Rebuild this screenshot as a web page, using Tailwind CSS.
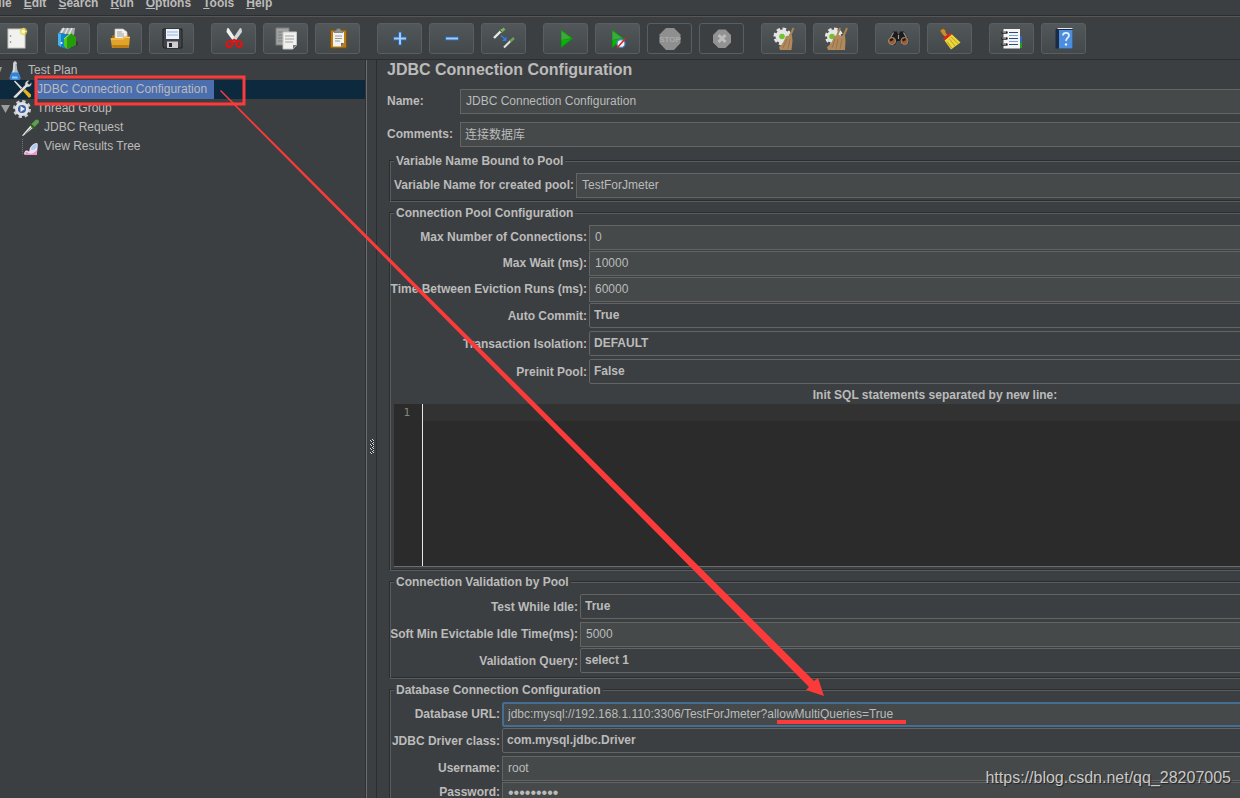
<!DOCTYPE html>
<html lang="en">
<head>
<meta charset="utf-8">
<title>JDBC Connection Configuration</title>
<script src="https://cdn.jsdelivr.net/npm/@tailwindcss/browser@4"></script>
</head>
<body class="relative flex h-screen flex-col overflow-hidden bg-[#3c3f41] font-['Liberation_Sans','Noto_Sans_CJK_SC',sans-serif] text-xs text-[#bbbbbb]">

<!-- Menu bar -->
<nav class="-mt-[5px] -ml-[9px] flex h-[21px] shrink-0 items-start gap-3 border-b border-[#2b2d2e] font-bold">
  <button class="leading-4"><u>F</u>ile</button>
  <button class="leading-4"><u>E</u>dit</button>
  <button class="leading-4"><u>S</u>earch</button>
  <button class="leading-4"><u>R</u>un</button>
  <button class="leading-4"><u>O</u>ptions</button>
  <button class="leading-4"><u>T</u>ools</button>
  <button class="leading-4"><u>H</u>elp</button>
</nav>

<!-- Toolbar -->
<div role="toolbar" class="-ml-[7px] flex h-[44px] shrink-0 gap-[17px] border-t border-b border-t-[#5a5653] border-b-[#2b2d2e] pt-[6px]">
  <div class="flex gap-[7px]">
    <button aria-label="New" class="flex h-[31px] w-[45px] items-center justify-center rounded-[3px] border border-[#5b5e60] bg-linear-to-b from-[#525759] to-[#43484a]">
      <svg class="size-6 shrink-0" viewBox="0 0 24 24"><rect x="4" y="2" width="17" height="19" fill="#f1f1ef" stroke="#c9c7c2"/><circle cx="6.500" cy="9" r=".8" fill="#777"/><circle cx="6.500" cy="15" r=".8" fill="#777"/><circle cx="19.500" cy="4.500" r="3.800" fill="#e6cf3a" opacity=".55"/><path d="M19.500 1v7M16 4.500h7" stroke="#f0dc4e" stroke-width="1.500"/><circle cx="19.500" cy="4.500" r="1.800" fill="#fffbd0"/></svg>
    </button>
    <button aria-label="Templates" class="flex h-[31px] w-[45px] items-center justify-center rounded-[3px] border border-[#5b5e60] bg-linear-to-b from-[#525759] to-[#43484a]">
      <svg class="size-6 shrink-0" viewBox="0 0 24 24"><path d="M3 6l3-5h13l-1 7z" fill="#a9adb0"/><path d="M5 6l3-5M9 7l3-6M13 7l3-6" stroke="#e5e7e8" stroke-width="1.500"/><path d="M15 21l7-3v-4l-6 4z" fill="#222" opacity=".5"/><path d="M2 6l8 1 3 2v13l-6-1-5-3z" fill="#1583c9"/><path d="M2 6l3 1v13l-3-2z" fill="#3fb4ee"/><circle cx="5.500" cy="16" r="1" fill="#fff"/><path d="M8 12l7-6 5 5v7l-9 4-3-3z" fill="#4ec51e"/><path d="M11 11l4-5 5 5v7l-9 4z" fill="#249c0c"/><path d="M8 12l7-6" stroke="#96ed5c"/></svg>
    </button>
    <button aria-label="Open" class="flex h-[31px] w-[45px] items-center justify-center rounded-[3px] border border-[#5b5e60] bg-linear-to-b from-[#525759] to-[#43484a]">
      <svg class="size-6 shrink-0" viewBox="0 0 24 24"><path d="M4 9l3-2h13l1 4v8H4z" fill="#a36d0c"/><path d="M7 13V2h8l4 3v8z" fill="#f2f2f0" stroke="#c8c8c6" stroke-width=".7"/><path d="M9 5h5M9 7h7M9 9h7" stroke="#92928f" stroke-width=".9"/><path d="M2.500 11h12l2-1.500H22l-1 10.500-1 1H4z" fill="#e2a32a"/><path d="M3 12h12l2-1.500h5" fill="none" stroke="#f7cd67"/><path d="M4 18h17l-.5 3H4.500z" fill="#bc7d13"/></svg>
    </button>
    <button aria-label="Save" class="flex h-[31px] w-[45px] items-center justify-center rounded-[3px] border border-[#5b5e60] bg-linear-to-b from-[#525759] to-[#43484a]">
      <svg class="size-6 shrink-0" viewBox="0 0 24 24"><path d="M3 2h19v19H4l-1-1z" fill="#41434a" stroke="#1f2023"/><path d="M6 2h13v10H6z" fill="#eef3fa"/><path d="M7 5h11M7 8h11" stroke="#8fb3dd"/><path d="M7 14.500h11v6.500H7z" fill="#cfcfd1"/><path d="M9 16h3v4H9z" fill="#26272a"/></svg>
    </button>
  </div>
  <div class="flex gap-[7px]">
    <button aria-label="Cut" class="flex h-[31px] w-[45px] items-center justify-center rounded-[3px] border border-[#5b5e60] bg-linear-to-b from-[#525759] to-[#43484a]">
      <svg class="size-6 shrink-0" viewBox="0 0 24 24"><path d="M5 1.500l1.500-.5 8 12-3 1.500L4.500 5z" fill="#f0f0f0"/><path d="M19.500 1.500L18 1l-8 12 3 1.500L20 5z" fill="#d3d5d5"/><ellipse cx="7.500" cy="17.200" rx="2.600" ry="3" fill="none" stroke="#dc1414" stroke-width="2.200" transform="rotate(35 7.500 17.200)"/><ellipse cx="17" cy="17.200" rx="2.600" ry="3" fill="none" stroke="#dc1414" stroke-width="2.200" transform="rotate(-35 17 17.200)"/><path d="M9 14.500l3.200-1.500 3.300 1.500" fill="none" stroke="#dc1414" stroke-width="2.200"/></svg>
    </button>
    <button aria-label="Copy" class="flex h-[31px] w-[45px] items-center justify-center rounded-[3px] border border-[#5b5e60] bg-linear-to-b from-[#525759] to-[#43484a]">
      <svg class="size-6 shrink-0" viewBox="0 0 24 24"><path d="M2 1h13v17H2z" fill="#a1a3a2" stroke="#7d7f7f"/><path d="M4 5h9M4 8h6M4 11h5M4 14h5" stroke="#7d7f7f"/><path d="M9 5h13.500v13L19 22H9z" fill="#f0f0ee" stroke="#c6c6c4"/><path d="M11 9h9M11 12h9M11 15h8" stroke="#a0a09e"/><path d="M22.500 18H19v4z" fill="#777"/></svg>
    </button>
    <button aria-label="Paste" class="flex h-[31px] w-[45px] items-center justify-center rounded-[3px] border border-[#5b5e60] bg-linear-to-b from-[#525759] to-[#43484a]">
      <svg class="size-6 shrink-0" viewBox="0 0 24 24"><rect x="4.500" y="3" width="16" height="18" rx="1" fill="#b97c17" stroke="#80500a"/><path d="M7 5h11v11l-3 3.500H7z" fill="#f2f2f0"/><path d="M9 9h7M9 11.500h7M9 14h5" stroke="#999"/><path d="M18 16h-3v3.500z" fill="#666"/><path d="M8 5.500V3.500h2L11 1.500h3l1 2h2v2z" fill="#8e918d" stroke="#5f625f" stroke-width=".6"/></svg>
    </button>
  </div>
  <div class="flex gap-[7px]">
    <button aria-label="Expand all" class="flex h-[31px] w-[45px] items-center justify-center rounded-[3px] border border-[#5b5e60] bg-linear-to-b from-[#525759] to-[#43484a]">
      <svg class="size-6 shrink-0" viewBox="0 0 24 24"><path d="M12 4.500v14M5 11.500h14" stroke="#2e66b4" stroke-width="4"/><path d="M12 5.500v12M6 11.500h12" stroke="#a5cdf8" stroke-width="2"/></svg>
    </button>
    <button aria-label="Collapse all" class="flex h-[31px] w-[45px] items-center justify-center rounded-[3px] border border-[#5b5e60] bg-linear-to-b from-[#525759] to-[#43484a]">
      <svg class="size-6 shrink-0" viewBox="0 0 24 24"><path d="M5 11.500h14" stroke="#2e66b4" stroke-width="4"/><path d="M6 11.500h12" stroke="#a5cdf8" stroke-width="2"/></svg>
    </button>
    <button aria-label="Toggle" class="flex h-[31px] w-[45px] items-center justify-center rounded-[3px] border border-[#5b5e60] bg-linear-to-b from-[#525759] to-[#43484a]">
      <svg class="size-6 shrink-0" viewBox="0 0 24 24"><path d="M2 11l8-8" stroke="#e8ebe6" stroke-width="2.400"/><path d="M8.500 5L12.500 1.500" stroke="#7cb25c" stroke-width="2.800"/><path d="M8 3l3.500 3.500" stroke="#446d33"/><path d="M12 20.500l7-7" stroke="#dfe2dd" stroke-width="2"/><path d="M18 14.500l4-3.500" stroke="#6da152" stroke-width="2.400"/><path d="M9 8.500l4.500 4" stroke="#2f7fe8" stroke-width="1.400"/><path d="M14.500 9.500v4.500H10z" fill="#2f7fe8"/></svg>
    </button>
  </div>
  <div class="flex gap-[7px]">
    <button aria-label="Start" class="flex h-[31px] w-[45px] items-center justify-center rounded-[3px] border border-[#5b5e60] bg-linear-to-b from-[#525759] to-[#43484a]">
      <svg class="size-6 shrink-0" viewBox="0 0 24 24"><path d="M7 2.500l12 9L7 21z" fill="#0a9a0a"/><path d="M7.500 4l9.500 7-9.500 2z" fill="#3fa83f"/><path d="M8 13l9-1-9 7z" fill="#06b806"/></svg>
    </button>
    <button aria-label="Start no pauses" class="flex h-[31px] w-[45px] items-center justify-center rounded-[3px] border border-[#5b5e60] bg-linear-to-b from-[#525759] to-[#43484a]">
      <svg class="size-6 shrink-0" viewBox="0 0 24 24"><path d="M6 2.500l12 9L6 21z" fill="#0a9a0a"/><path d="M6.500 4l9.500 7-9.500 2z" fill="#3fa83f"/><path d="M7 13l8-1-8 7z" fill="#06b806"/><circle cx="15" cy="16.500" r="4" fill="#eef4fb" stroke="#4a87c9" stroke-width="1.300"/><path d="M11 21l8.500-9.500" stroke="#e32222" stroke-width="1.500"/></svg>
    </button>
    <button aria-label="Stop" class="flex h-[31px] w-[45px] items-center justify-center rounded-[3px] border border-[#5b5e60]">
      <svg class="size-6 shrink-0" viewBox="0 0 24 24"><path d="M8 1h8l6.500 6.500v8.500L16 23H8l-6.500-7V7.500z" fill="#8f8f8f"/><text x="12" y="15" text-anchor="middle" font-size="8" font-weight="bold" fill="#ababab" font-family="Liberation Sans">STOP</text></svg>
    </button>
    <button aria-label="Shutdown" class="flex h-[31px] w-[45px] items-center justify-center rounded-[3px] border border-[#5b5e60]">
      <svg class="size-6 shrink-0" viewBox="0 0 24 24"><path d="M8.500 2.500h7L21 8v7.500L15.500 21h-7L3 15.500V8z" fill="#929292"/><path d="M8.500 8l7 7M15.500 8l-7 7" stroke="#bcbcbc" stroke-width="3"/></svg>
    </button>
  </div>
  <div class="flex gap-[7px]">
    <button aria-label="Clear" class="flex h-[31px] w-[45px] items-center justify-center rounded-[3px] border border-[#5b5e60] bg-linear-to-b from-[#525759] to-[#43484a]">
      <svg class="size-6 shrink-0" viewBox="0 0 24 24"><circle cx="10.500" cy="9.500" r="7.800" fill="none" stroke="#e6e6e4" stroke-width="2.500" stroke-dasharray="3.600 2.500"/><circle cx="10.500" cy="9.500" r="7" fill="#e6e6e4"/><circle cx="10" cy="9.500" r="2.800" fill="#6fc32e"/><path d="M21.500 1l-3.500 8" stroke="#a98350" stroke-width="2"/><path d="M14 9l6-1 .5 6-1 9H8l-1-3c3-2 5-6 7-11z" fill="#b08a5c"/><path d="M15 12l-4 9M18 12l-2 10" stroke="#96744a" stroke-width="1"/></svg>
    </button>
    <button aria-label="Clear all" class="flex h-[31px] w-[45px] items-center justify-center rounded-[3px] border border-[#5b5e60] bg-linear-to-b from-[#525759] to-[#43484a]">
      <svg class="size-6 shrink-0" viewBox="0 0 24 24"><circle cx="10" cy="9.500" r="7.800" fill="none" stroke="#e6e6e4" stroke-width="2.500" stroke-dasharray="3.600 2.500"/><circle cx="10" cy="9.500" r="7" fill="#e6e6e4"/><circle cx="8" cy="9.500" r="2.800" fill="#6fc32e"/><path d="M16 1l-3 8M23 1l-3.500 8" stroke="#a98350" stroke-width="2"/><path d="M10 9l5-1 2 1 4-1 .5 6-.5 9H4l-1-3c3-2 6-6 7-11z" fill="#b08a5c"/><path d="M11 12l-3 9M14 12l-2 10M18 12l-2 10" stroke="#96744a"/></svg>
    </button>
  </div>
  <div class="flex gap-[7px]">
    <button aria-label="Search" class="flex h-[31px] w-[45px] items-center justify-center rounded-[3px] border border-[#5b5e60] bg-linear-to-b from-[#525759] to-[#43484a]">
      <svg class="size-6 shrink-0" viewBox="0 0 24 24"><path d="M7 4.500h4l1 3h1l1-3h4l4 7 1 4-3 2.500h-4l-2-4h-3l-2 4H5L2 15.500l1-4z" fill="#1b1b1c"/><path d="M7.500 5.500l-3 5M17.500 5.500l3 5M12.500 8v4" stroke="#999" stroke-width="1.200"/><circle cx="6" cy="14" r="3.600" fill="#a65a28" stroke="#8c8c8c"/><circle cx="18.500" cy="14" r="3.600" fill="#a65a28" stroke="#8c8c8c"/><path d="M4 13.500l3-1.500M16.500 13.500l3-1.500" stroke="#2c1408" stroke-width="2"/></svg>
    </button>
    <button aria-label="Reset search" class="flex h-[31px] w-[45px] items-center justify-center rounded-[3px] border border-[#5b5e60] bg-linear-to-b from-[#525759] to-[#43484a]">
      <svg class="size-6 shrink-0" viewBox="0 0 24 24"><path d="M2 3.500l3-2 2.500 1.500.5 3 2 2-3 2-3-3z" fill="#c98d34" stroke="#7d5316" stroke-width=".7"/><path d="M6.500 13.500L13.500 7l9 8.500-9.500 7z" fill="#ecd63b"/><path d="M9 14.500l5 7M11.500 12l5.500 7M13 10l7.500 7" stroke="#b39a18" stroke-width=".9"/><path d="M5.500 12.500L13 6.500" stroke="#d92424" stroke-width="2.600"/></svg>
    </button>
  </div>
  <div class="flex gap-[7px]">
    <button aria-label="Function helper" class="flex h-[31px] w-[45px] items-center justify-center rounded-[3px] border border-[#5b5e60] bg-linear-to-b from-[#525759] to-[#43484a]">
      <svg class="size-6 shrink-0" viewBox="0 0 24 24"><path d="M19 9h3v6.500h-3z" fill="#2c66c8"/><path d="M19 15.500h3V21h-3z" fill="#279a1c"/><path d="M3.500 2h16.500v19.500H3.500z" fill="#f5f5f5"/><path d="M9 5.500h9M9 11.500h9M9 17.500h9" stroke="#2c4c78" stroke-width="1.200"/><path d="M9 8.500h9M9 14.500h9" stroke="#77a0de"/><path d="M2.500 5.500h4M2.500 11.500h4M2.500 17.500h4" stroke="#222" stroke-width="2.600" stroke-linecap="round"/><path d="M2.500 5h3.500M2.500 11h3.500M2.500 17h3.500" stroke="#ddd"/></svg>
    </button>
    <button aria-label="Help" class="flex h-[31px] w-[45px] items-center justify-center rounded-[3px] border border-[#5b5e60] bg-linear-to-b from-[#525759] to-[#43484a]">
      <svg class="size-6 shrink-0" viewBox="0 0 24 24"><path d="M3.500 2.500l2-1.500h15v20.500h-17z" fill="#1c2b42"/><path d="M7 3h13.500v18.500H7z" fill="#4d8ddd"/><path d="M5.500 1.500h15" stroke="#e5e5e5"/><path d="M11 8.500c0-3.500 6-3.500 6 0 0 2.500-3 2.500-3 5.500" fill="none" stroke="#e4effc" stroke-width="1.700"/><circle cx="14" cy="17.500" r="1.200" fill="#e4effc"/></svg>
    </button>
  </div>
</div>

<div class="flex min-h-0 flex-1">
  <!-- Test plan tree -->
  <ul role="tree" class="w-[366px] shrink-0 border-r border-[#2f3132] pt-px">
    <li role="treeitem" class="flex h-[19px] items-center">
      <svg class="h-2 w-1" viewBox="0 0 4 8"><path d="M-5 0h7L-1 8z" fill="#9a9c9d"/></svg>
      <svg class="ml-[5px] h-[19px] w-3" viewBox="0 0 12 19"><path d="M4.500 2h3l.8 7 3.200 8-1 1.500h-9l-1-1.500 3.200-8z" fill="#b3bac1"/><path d="M4 2h4M6 0v2M5 3v7l-2 3" stroke="#f3f5f7" fill="none"/><path d="M2.500 11.500h7L11.500 17l-1 1.500H1.500L.5 17z" fill="#2f83dd"/><path d="M3 15.500h5l1 2H3z" fill="#8fd0ff"/></svg>
      <span class="ml-[7px] leading-[19px]">Test Plan</span>
    </li>
    <li role="treeitem" aria-selected="true" class="flex h-[19px] items-center bg-[#0d293e]">
      <svg class="ml-[13px] h-[19px] w-[19px]" viewBox="0 0 19 19"><path d="M1 1.500l1-1 8 8-1.500 1.500z" fill="#d9dada"/><path d="M9 10l2-2 7 6.500v2L16 18z" fill="#e9b51c"/><path d="M1 18l-.5-1.500L12 5c-.5-3 2-5 4.500-4.500L14.500 3l1.500 1.500L18.500 2.500C19 5 17 7.500 14 7L3 18z" fill="#dcdddd" stroke="#3a3c3d" stroke-width=".5"/></svg>
      <span class="ml-1 bg-[#4b6eaf] pr-[7px] pl-px leading-[19px]">JDBC Connection Configuration</span>
    </li>
    <li role="treeitem" class="flex h-[19px] items-center">
      <svg class="ml-px h-2 w-[9px]" viewBox="0 0 9 8"><path d="M0 0h9L4.500 8z" fill="#9a9c9d"/></svg>
      <svg class="ml-[3px] h-[18px] w-[18px]" viewBox="0 0 18 18"><circle cx="9" cy="9" r="7.500" fill="none" stroke="#c9ccd1" stroke-width="3" stroke-dasharray="3.200 2.690"/><circle cx="9" cy="9" r="7" fill="#dfe1e5"/><circle cx="9" cy="9" r="4" fill="#3d5fa3"/><path d="M7.500 6l4.500 3-4.500 3z" fill="#e8eef9"/></svg>
      <span class="ml-[6px] leading-[19px]">Thread Group</span>
    </li>
    <li role="treeitem" class="flex h-[19px] items-center">
      <svg class="ml-[22px] h-[18px] w-[18px]" viewBox="0 0 18 18"><path d="M0 16.500L9 6l2.500 2.500L1 17z" fill="#e4e7e2"/><path d="M3 15l7-7" stroke="#8b908a"/><path d="M7.500 4.500l5.500 5.500" stroke="#2c5c22" stroke-width="1.800"/><path d="M9.500 5L13.500 1c2-1.500 4.500.5 3 3L12.500 8z" fill="#5f9f4a"/></svg>
      <span class="ml-1 leading-[19px]">JDBC Request</span>
    </li>
    <li role="treeitem" class="flex h-[19px] items-center">
      <svg class="ml-[22px] h-[18px] w-[18px]" viewBox="0 0 18 18"><path d="M.5 1v15.500" stroke="#777" stroke-dasharray="1 1"/><path d="M2 16.500c0-3 2-5 4-3.500s1-1 2-3 4-5 6.500-5 .5 6 .5 11.500z" fill="#f3dff2"/><path d="M3 17c0-3 1.500-4 3-2.500S10 17 15 12v5z" fill="#e79acb"/><path d="M9 12c0-4 3-6 5.500-6.500 1 2 0 7-5.500 6.500z" fill="#a9cdf2"/></svg>
      <span class="ml-1 leading-[19px]">View Results Tree</span>
    </li>
  </ul>

  <!-- Split handle -->
  <div class="flex w-[11px] shrink-0 items-center justify-center border-r border-l border-r-[#2b2d2e] border-l-[#6b6d6e] pt-9">
    <svg class="h-4 w-1" viewBox="0 0 4 16" shape-rendering="crispEdges"><path d="M2 0h1v1h-1zM0 1h1v1h-1zM1 2h1v1h-1zM3 3h1v1h-1zM2 4h1v1h-1zM0 5h1v1h-1zM1 6h1v1h-1zM3 7h1v1h-1zM2 8h1v1h-1zM0 9h1v1h-1zM1 10h1v1h-1zM3 11h1v1h-1zM2 12h1v1h-1zM0 13h1v1h-1zM1 14h1v1h-1zM3 1h1v1h-1zM3 5h1v1h-1zM3 9h1v1h-1zM3 13h1v1h-1z" fill="#d8d8d8"/><path d="M3 2h1v1h-1zM1 1h1v1h-1zM2 3h1v1h-1zM1 5h1v1h-1zM2 6h1v1h-1zM2 7h1v1h-1zM1 9h1v1h-1zM3 10h1v1h-1zM2 11h1v1h-1zM1 13h1v1h-1z" fill="#1e1e1e"/></svg>
  </div>

  <!-- Configuration form; its groups run on past the window's right edge -->
  <main class="min-w-0 flex-1 overflow-hidden">
    <form class="-mr-60 pl-[13px]">
      <h1 class="-ml-[3px] h-[29px] text-base leading-5 font-bold">JDBC Connection Configuration</h1>
      <div class="-ml-[3px] flex items-center">
        <label for="name" class="w-[73px] shrink-0 pb-0.5 font-bold">Name:</label>
        <input id="name" value="JDBC Connection Configuration" class="h-[25px] min-w-0 flex-1 border border-[#646464] bg-[#45494a] px-[5px] pb-0.5 outline-none">
      </div>
      <div class="mt-2 -ml-[3px] flex items-center">
        <label for="comments" class="w-[73px] shrink-0 pb-0.5 font-bold">Comments:</label>
        <input id="comments" value="连接数据库" class="h-[25px] min-w-0 flex-1 border border-[#646464] bg-[#45494a] px-1 pb-0.5 outline-none">
      </div>

      <fieldset class="mt-[6px] border border-[#5a5d5f] px-[3px] pt-1 pb-[3px] shadow-[-1px_-1px_0_#2b2d2e,inset_-1px_-1px_0_#2b2d2e]">
        <legend class="bg-[#3c3f41] px-0.5 font-bold leading-4">Variable Name Bound to Pool</legend>
        <div class="flex items-center gap-0.5">
          <label for="pool" class="flex w-[180px] shrink-0 justify-end pb-0.5 font-bold whitespace-nowrap">Variable Name for created pool:</label>
          <input id="pool" value="TestForJmeter" class="h-[25px] min-w-0 flex-1 border border-[#646464] bg-[#45494a] px-[5px] pb-0.5 outline-none">
        </div>
      </fieldset>

      <fieldset class="mt-[3px] border border-[#5a5d5f] px-[3px] pt-1 pb-[3px] shadow-[-1px_-1px_0_#2b2d2e,inset_-1px_-1px_0_#2b2d2e]">
        <legend class="bg-[#3c3f41] px-0.5 font-bold leading-4">Connection Pool Configuration</legend>
        <div class="flex flex-col gap-px">
          <div class="flex items-center gap-0.5">
            <label for="maxconn" class="flex w-[193px] shrink-0 justify-end pb-0.5 font-bold whitespace-nowrap">Max Number of Connections:</label>
            <input id="maxconn" value="0" class="h-[25px] min-w-0 flex-1 border border-[#646464] bg-[#45494a] px-[5px] pb-0.5 outline-none">
          </div>
          <div class="flex items-center gap-0.5">
            <label for="maxwait" class="flex w-[193px] shrink-0 justify-end pb-0.5 font-bold whitespace-nowrap">Max Wait (ms):</label>
            <input id="maxwait" value="10000" class="h-[25px] min-w-0 flex-1 border border-[#646464] bg-[#45494a] px-[5px] pb-0.5 outline-none">
          </div>
          <div class="flex items-center gap-0.5">
            <label for="evict" class="flex w-[193px] shrink-0 justify-end pb-0.5 font-bold whitespace-nowrap">Time Between Eviction Runs (ms):</label>
            <input id="evict" value="60000" class="h-[25px] min-w-0 flex-1 border border-[#646464] bg-[#45494a] px-[5px] pb-0.5 outline-none">
          </div>
        </div>
        <div class="mt-px flex flex-col gap-[3px]">
          <div class="flex items-center gap-0.5">
            <label for="autocommit" class="flex w-[193px] shrink-0 justify-end font-bold whitespace-nowrap">Auto Commit:</label>
            <select id="autocommit" class="h-[25px] min-w-0 flex-1 appearance-none rounded-[2px] border border-[#646464] bg-[#3c3f41] px-1 pb-0.5 font-bold outline-none"><option>True</option><option>False</option></select>
          </div>
          <div class="flex items-center gap-0.5">
            <label for="isolation" class="flex w-[193px] shrink-0 justify-end font-bold whitespace-nowrap">Transaction Isolation:</label>
            <select id="isolation" class="h-[25px] min-w-0 flex-1 appearance-none rounded-[2px] border border-[#646464] bg-[#3c3f41] px-1 pb-0.5 font-bold outline-none"><option>DEFAULT</option></select>
          </div>
          <div class="flex items-center gap-0.5">
            <label for="preinit" class="flex w-[193px] shrink-0 justify-end font-bold whitespace-nowrap">Preinit Pool:</label>
            <select id="preinit" class="h-[25px] min-w-0 flex-1 appearance-none rounded-[2px] border border-[#646464] bg-[#3c3f41] px-1 pb-0.5 font-bold outline-none"><option>False</option><option>True</option></select>
          </div>
        </div>
        <label for="initsql" class="mt-[3px] mb-px block text-center font-bold leading-4">Init SQL statements separated by new line:</label>
        <div class="flex h-[163px] border-b border-[#6b6d6e] bg-[#2b2b2b] font-['DejaVu_Sans_Mono',monospace] text-[11px] leading-4">
          <div class="w-7 shrink-0 pt-px pr-3 text-right text-[#7d8a7d]">1</div>
          <textarea id="initsql" class="min-w-0 flex-1 resize-none border-l border-[#e6e6e6] bg-linear-to-b from-[#323232] from-[17px] to-[#2b2b2b] to-[17px] px-1 outline-none"></textarea>
        </div>
      </fieldset>

      <fieldset class="mt-[3px] border border-[#5a5d5f] px-[3px] pt-1 pb-[5px] shadow-[-1px_-1px_0_#2b2d2e,inset_-1px_-1px_0_#2b2d2e]">
        <legend class="bg-[#3c3f41] px-0.5 font-bold leading-4">Connection Validation by Pool</legend>
        <div class="flex items-center gap-0.5">
          <label for="idle" class="flex w-[184px] shrink-0 justify-end font-bold whitespace-nowrap">Test While Idle:</label>
          <select id="idle" class="h-[25px] min-w-0 flex-1 appearance-none rounded-[2px] border border-[#646464] bg-[#3c3f41] px-1 pb-0.5 font-bold outline-none"><option>True</option><option>False</option></select>
        </div>
        <div class="mt-[3px] flex items-center gap-0.5">
          <label for="softmin" class="flex w-[184px] shrink-0 justify-end pb-0.5 font-bold whitespace-nowrap">Soft Min Evictable Idle Time(ms):</label>
          <input id="softmin" value="5000" class="h-[25px] min-w-0 flex-1 border border-[#646464] bg-[#45494a] px-[5px] pb-0.5 outline-none">
        </div>
        <div class="mt-px flex items-center gap-0.5">
          <label for="query" class="flex w-[184px] shrink-0 justify-end font-bold whitespace-nowrap">Validation Query:</label>
          <select id="query" class="h-[25px] min-w-0 flex-1 appearance-none rounded-[2px] border border-[#646464] bg-[#3c3f41] px-1 pb-0.5 font-bold outline-none"><option>select 1</option></select>
        </div>
      </fieldset>

      <fieldset class="mt-[3px] border border-[#5a5d5f] px-[3px] pt-1 pb-[5px] shadow-[-1px_-1px_0_#2b2d2e,inset_-1px_-1px_0_#2b2d2e]">
        <legend class="bg-[#3c3f41] px-0.5 font-bold leading-4">Database Connection Configuration</legend>
        <div class="flex items-center gap-0.5">
          <label for="url" class="flex w-[106px] shrink-0 justify-end pb-0.5 font-bold whitespace-nowrap">Database URL:</label>
          <input id="url" value="jdbc:mysql://192.168.1.110:3306/TestForJmeter?allowMultiQueries=True" class="h-[25px] min-w-0 flex-1 rounded-[2px] border-2 border-[#466d94] bg-[#45494a] px-1 pb-0.5 outline-none">
        </div>
        <div class="mt-px flex items-center gap-0.5">
          <label for="driver" class="flex w-[106px] shrink-0 justify-end font-bold whitespace-nowrap">JDBC Driver class:</label>
          <select id="driver" class="h-[25px] min-w-0 flex-1 appearance-none rounded-[2px] border border-[#646464] bg-[#3c3f41] px-1 pb-0.5 font-bold outline-none"><option>com.mysql.jdbc.Driver</option></select>
        </div>
        <div class="mt-[3px] flex items-center gap-0.5">
          <label for="user" class="flex w-[106px] shrink-0 justify-end pb-0.5 font-bold whitespace-nowrap">Username:</label>
          <input id="user" value="root" class="h-[25px] min-w-0 flex-1 border border-[#646464] bg-[#45494a] px-[5px] pb-0.5 outline-none">
        </div>
        <div class="mt-px flex items-start gap-0.5">
          <label for="pass" class="flex w-[106px] shrink-0 justify-end pt-0.5 font-bold whitespace-nowrap">Password:</label>
          <input id="pass" type="password" value="123456789" class="h-[25px] min-w-0 flex-1 border border-[#646464] bg-[#45494a] px-[5px] pb-1 text-base outline-none">
        </div>
      </fieldset>
    </form>
  </main>
</div>

<!-- Red annotations over the window -->
<svg class="pointer-events-none absolute top-0 left-0" width="1240" height="798" viewBox="0 0 1240 798" aria-hidden="true">
  <rect x="36" y="77" width="208" height="27" fill="none" stroke="#fc3a3a" stroke-width="3"/>
  <path d="M220 91l1-1 593 591 4-3 6 18-18-6 3-3z" fill="#fc3a3a"/>
  <path d="M777 720h129v4H777z" fill="#fc3a3a"/>
</svg>
<span class="absolute right-[9px] bottom-2 text-base leading-6 text-[#c9c9c9] [text-shadow:1px_1px_1px_#222]">https://blog.csdn.net/qq_28207005</span>
</body>
</html>
